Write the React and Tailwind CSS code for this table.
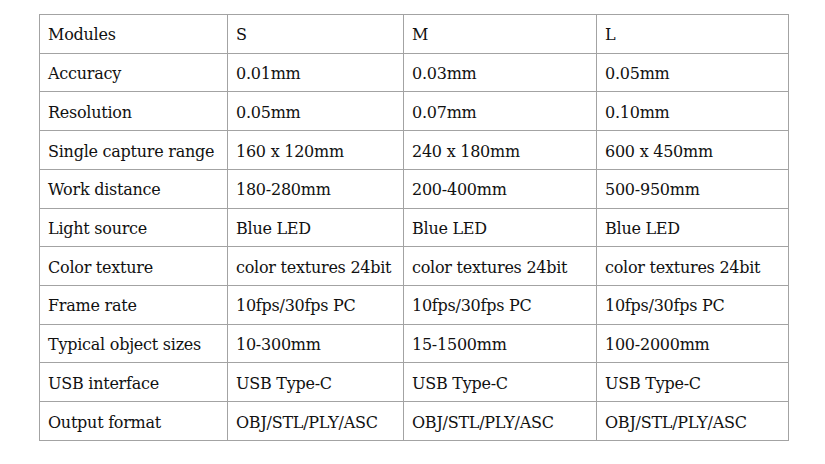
export default function App() {
  const rows = [
    ["Modules", "S", "M", "L"],
    ["Accuracy", "0.01mm", "0.03mm", "0.05mm"],
    ["Resolution", "0.05mm", "0.07mm", "0.10mm"],
    ["Single capture range", "160 x 120mm", "240 x 180mm", "600 x 450mm"],
    ["Work distance", "180-280mm", "200-400mm", "500-950mm"],
    ["Light source", "Blue LED", "Blue LED", "Blue LED"],
    ["Color texture", "color textures 24bit", "color textures 24bit", "color textures 24bit"],
    ["Frame rate", "10fps/30fps PC", "10fps/30fps PC", "10fps/30fps PC"],
    ["Typical object sizes", "10-300mm", "15-1500mm", "100-2000mm"],
    ["USB interface", "USB Type-C", "USB Type-C", "USB Type-C"],
    ["Output format", "OBJ/STL/PLY/ASC", "OBJ/STL/PLY/ASC", "OBJ/STL/PLY/ASC"],
  ];
  return (
    <div className="w-[825px] h-[464px] bg-white pt-[14px] pl-[39px]">
      <div
        className="grid grid-cols-[188px_176px_193px_192px] w-[750px] border-l border-t border-[#a3a3a3] text-[#111111] text-[16px] tracking-[-0.25px]"
        style={{ fontFamily: '"DejaVu Serif", serif' }}
      >
        {rows.map((r, i) =>
          r.map((c, j) => (
            <div
              key={i + "-" + j}
              className="h-[38.73px] border-r border-b border-[#a3a3a3] flex items-center pl-[8px] pt-[3px] whitespace-nowrap"
            >
              {c}
            </div>
          ))
        )}
      </div>
    </div>
  );
}
